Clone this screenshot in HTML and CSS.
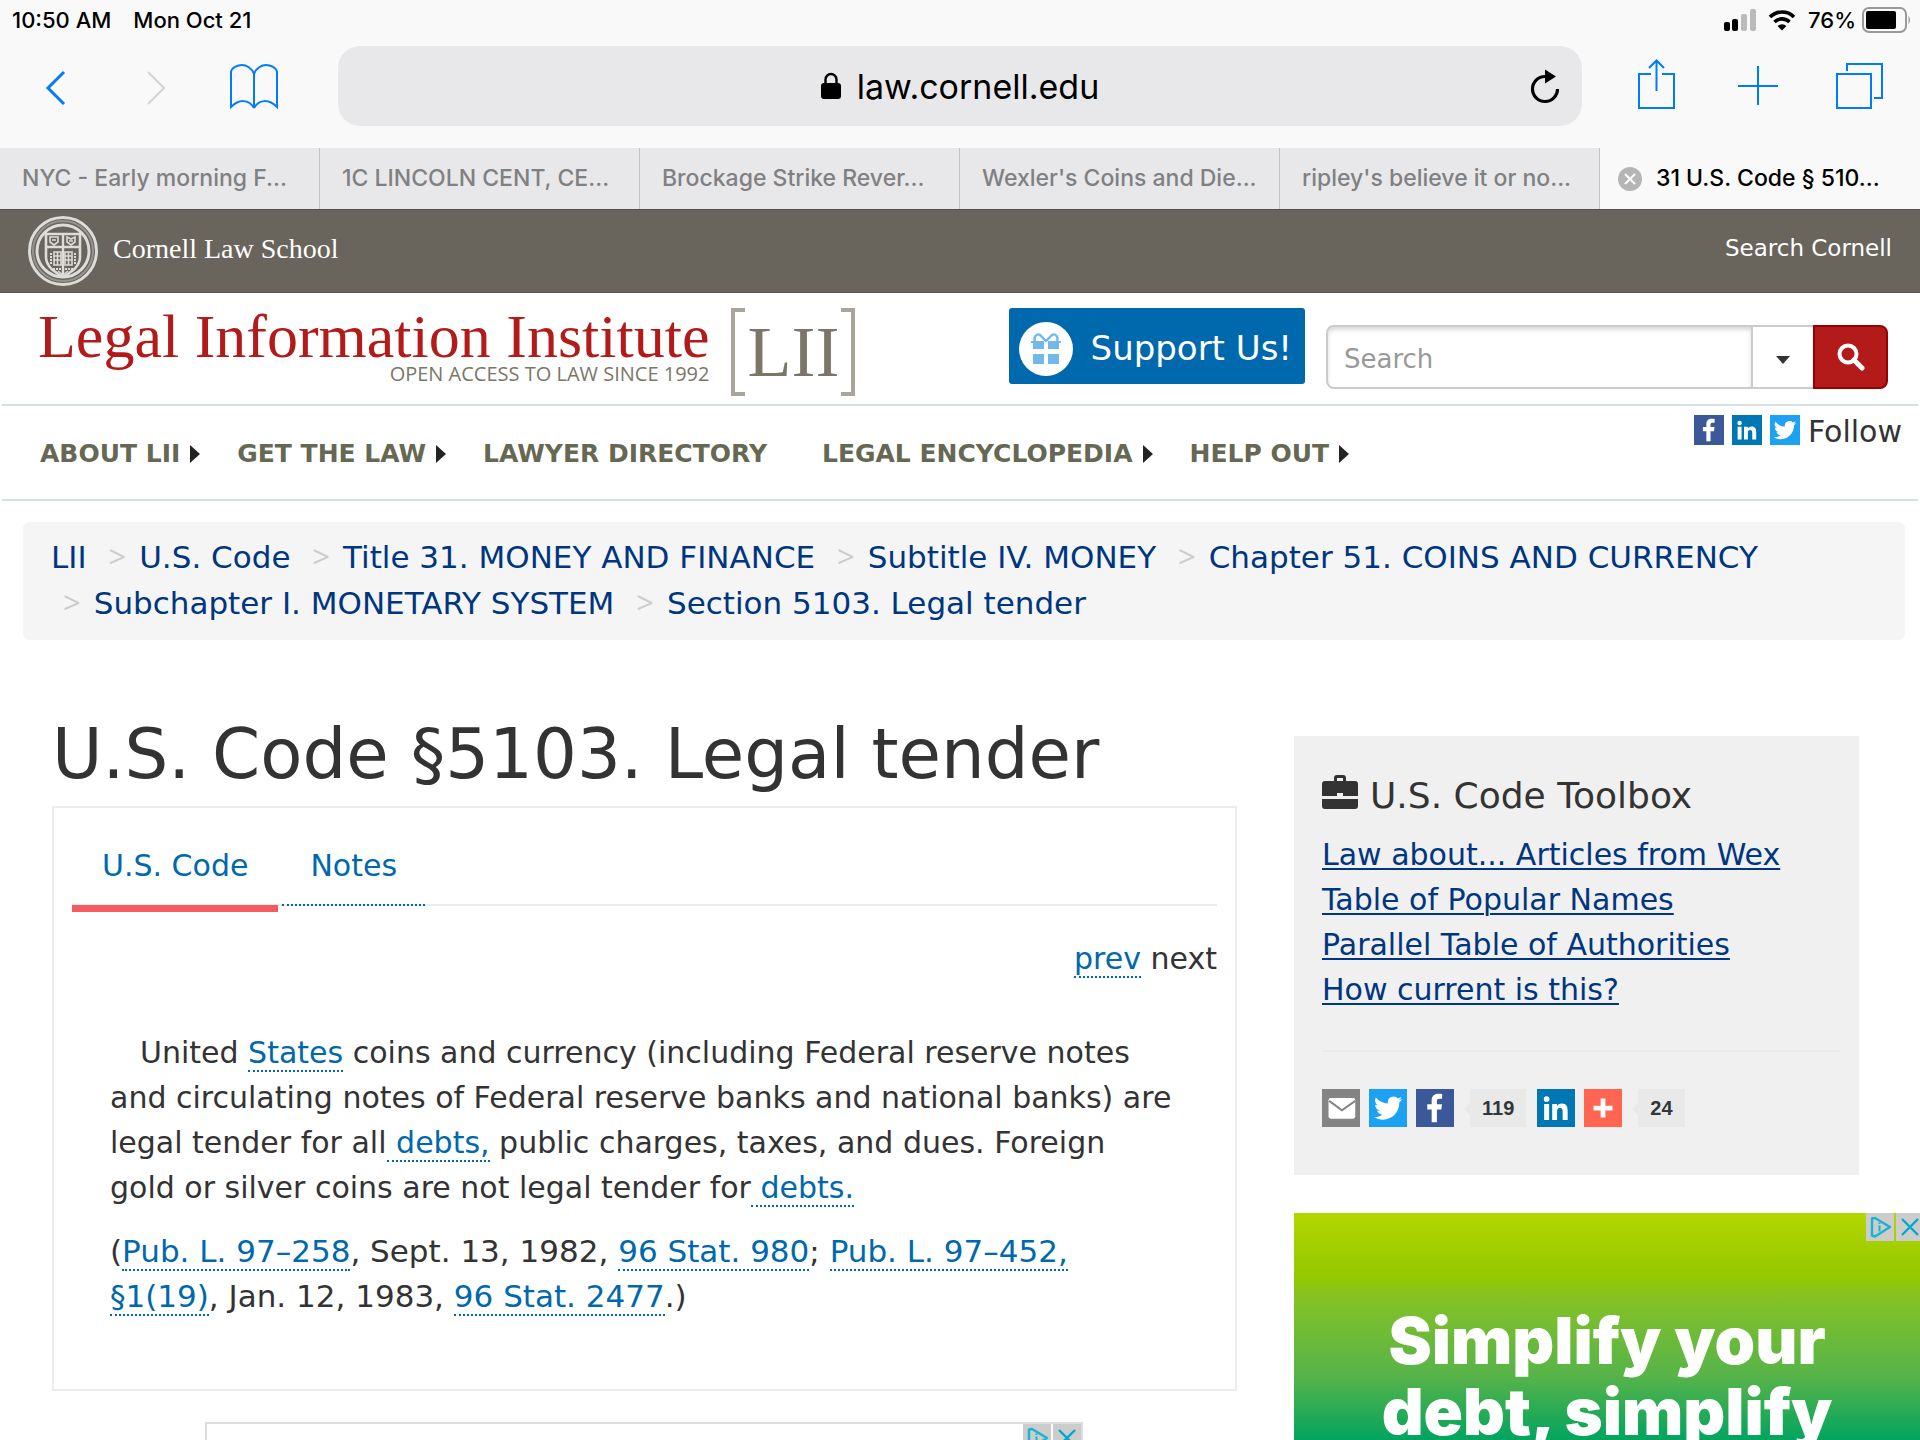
FILE: index.html
```html
<!DOCTYPE html>
<html lang="en">
<head>
  <meta charset="utf-8">
  <meta name="viewport" content="width=device-width, initial-scale=1">
  <title>31 U.S. Code § 5103 - Legal tender</title>
  <link rel="stylesheet" href="styles.css">
</head>
<body>
  <!-- shared icons -->
  <svg class="sprite" aria-hidden="true">
    <symbol id="i-facebook" viewBox="0 0 32 32">
      <path d="M17.6 28V17.2h3.7l.6-4.3h-4.3v-2.7c0-1.2.4-2 2.1-2h2.3V4.2c-.4 0-1.7-.2-3.3-.2-3.3 0-5.5 2-5.5 5.700v3.200H9.500v4.300h3.700V28z" fill="#fff"/>
    </symbol>
    <symbol id="i-linkedin" viewBox="0 0 32 32">
      <path d="M6 12.600h4.200V26H6zM8.100 6a2.400 2.400 0 1 1 0 4.800 2.400 2.400 0 0 1 0-4.800zM12.800 12.600h4v1.900c.6-1.100 2-2.200 4-2.200 4.200 0 5 2.700 5 6.300V26h-4.200v-6.500c0-1.600 0-3.600-2.200-3.600s-2.500 1.700-2.500 3.400V26h-4.100z" fill="#fff"/>
    </symbol>
    <symbol id="i-twitter" viewBox="0 0 32 32">
      <path d="M28 8.600a9.900 9.900 0 0 1-2.800.8 5 5 0 0 0 2.200-2.700c-1 .5-2 1-3.100 1.200a4.900 4.900 0 0 0-8.500 3.300c0 .4 0 .8.1 1.100-4-.2-7.700-2.100-10.100-5.100a4.900 4.900 0 0 0 1.500 6.600 4.900 4.900 0 0 1-2.200-.6v.1c0 2.400 1.700 4.400 3.900 4.800a4.900 4.900 0 0 1-2.200.1 4.900 4.900 0 0 0 4.600 3.400A9.900 9.900 0 0 1 4 23.600a13.900 13.900 0 0 0 7.500 2.200c9.100 0 14-7.500 14-14v-.6c1-.7 1.800-1.600 2.500-2.600z" fill="#fff"/>
    </symbol>
    <symbol id="i-adchoices" viewBox="0 0 28 28">
      <path d="M6 5.500v17l3 1 15-9.500L9 5z" fill="none" stroke="#19b4cf" stroke-width="2.400" stroke-linejoin="round"/>
      <path d="M13.500 12.500v6M13.500 9.500v1.500" stroke="#19b4cf" stroke-width="2"/>
    </symbol>
    <symbol id="i-adclose" viewBox="0 0 28 28">
      <path d="M6 6l16 16M22 6L6 22" stroke="#00a9cc" stroke-width="2.400"/>
    </symbol>
  </svg>

  <header class="browser">
    <div class="status">
      <span>10:50 AM</span>
      <span>Mon Oct 21</span>
      <div class="status-right">
        <svg width="32" height="24" viewBox="0 0 32 24">
          <rect x="0" y="14" width="6" height="9" rx="2"/>
          <rect x="8" y="11" width="6" height="12" rx="2"/>
          <rect x="17" y="6" width="6" height="17" rx="2" fill="#bbb"/>
          <rect x="26" y="1" width="6" height="22" rx="2" fill="#bbb"/>
        </svg>
        <svg width="28" height="24" viewBox="0 0 28 24" fill="none" stroke="#000" stroke-width="3.600">
          <path d="M2 9a17 17 0 0 1 24 0M6.500 14a10.600 10.600 0 0 1 15 0"/>
          <path d="M14 22.500l-4.400-4.400a6 6 0 0 1 8.800 0z" fill="#000" stroke="none"/>
        </svg>
        <span>76%</span>
        <svg width="50" height="28" viewBox="0 0 50 28">
          <rect x="1" y="2" width="43" height="24" rx="6" fill="none" stroke="#999" stroke-width="2"/>
          <rect x="4" y="5" width="30" height="18" rx="2"/>
          <path d="M46.500 9.500q3 4.500 0 9z" fill="#999"/>
        </svg>
      </div>
    </div>

    <div class="toolbar">
      <div class="tools">
        <button class="tool" aria-label="Back">
          <svg width="56" height="56" viewBox="0 0 56 56"><path d="M36 14L20 30l16 16" stroke-width="3"/></svg>
        </button>
        <button class="tool tool-off" aria-label="Forward" disabled>
          <svg width="56" height="56" viewBox="0 0 56 56"><path d="M21 14l16 16-16 16" stroke-width="2"/></svg>
        </button>
        <button class="tool" aria-label="Bookmarks">
          <svg width="56" height="56" viewBox="0 0 56 56"><path d="M28 50V16C26 10 20 7 16 7S6 9 5 14v35c8-8 18-8 23 1M28 16c2-6 8-9 12-9S50 9 51 14v35c-8-8-18-8-23 1"/></svg>
        </button>
      </div>
      <div class="address">
        <svg width="20" height="28" viewBox="0 0 20 28"><path d="M4.500 13V7.500a5.500 5.500 0 0 1 11 0V13" fill="none" stroke="#000" stroke-width="2.400"/><rect y="11" width="20" height="16" rx="3"/></svg>
        <span>law.cornell.edu</span>
        <button class="reload" aria-label="Reload">
          <svg width="30" height="36" viewBox="0 0 30 36"><path d="M15 8.500a12.500 12.500 0 1 0 12.500 12.500" fill="none" stroke="#000" stroke-width="3.200"/><path d="M15 1.500l11 7-11 7z"/></svg>
        </button>
      </div>
      <div class="tools tools-right">
        <button class="tool" aria-label="Share">
          <svg width="56" height="56" viewBox="0 0 56 56"><path d="M22 16H10v34h35V16H33M27.500 33V3M20 10l7.500-7.500L35 10"/></svg>
        </button>
        <button class="tool" aria-label="New tab">
          <svg width="56" height="56" viewBox="0 0 56 56"><path d="M28 8v39M8 28h40"/></svg>
        </button>
        <button class="tool" aria-label="Show tabs">
          <svg width="56" height="56" viewBox="0 0 56 56"><path d="M6 16h34v34H6zM16 13V6h35v34h-8"/></svg>
        </button>
      </div>
    </div>

    <nav class="tabs" aria-label="Open tabs">
      <a href="#">NYC - Early morning F...</a>
      <a href="#">1C LINCOLN CENT, CE...</a>
      <a href="#">Brockage Strike Rever...</a>
      <a href="#">Wexler's Coins and Die...</a>
      <a href="#">ripley's believe it or no...</a>
      <a href="#" class="active">
        <svg width="24" height="24" viewBox="0 0 24 24"><circle cx="12" cy="12" r="12" fill="#b5b5b6"/><path d="M7 7l10 10M17 7L7 17" stroke="#fff" stroke-width="2"/></svg>
        31 U.S. Code § 510...
      </a>
    </nav>
  </header>

  <div class="cornell">
    <a href="#" class="school">
      <svg width="70" height="70" viewBox="0 0 70 70" fill="none" stroke="#dcdcd8">
        <circle cx="35" cy="35" r="33.500" stroke-width="3"/>
        <circle cx="35" cy="35" r="30" stroke-width="2" opacity=".4"/>
        <circle cx="35" cy="35" r="26" stroke-width="3"/>
        <path d="M18 18h34v23c0 10-9 15-17 20-8-5-17-10-17-20z" stroke-width="2.600"/>
        <path d="M18 31h34M35 18v13M35 31v29" stroke-width="2.400"/>
        <path d="M22 21h8v5l-4 3-4-3zM39 21l4 2 4-2v5l-4 3-4-3zM24 24h4M41 25h4" stroke-width="1.600"/>
        <path d="M26 36h7v13h-7zM37 36h7v13h-7zM26 40h7M26 44h7M37 40h7M37 44h7M29.500 36v13M40.500 36v13" stroke-width="1.600"/>
        <path d="M23 37v12M47 37v12M25 53h20" stroke-width="2" stroke-dasharray="2 1"/>
        <path d="M30 55l5 4 5-4" stroke-width="1.600"/>
      </svg>
      <span>Cornell Law School</span>
    </a>
    <a href="#" class="search-cornell">Search Cornell</a>
  </div>

  <div class="masthead">
    <a href="#" class="logo">
      <span class="logo-words">
        <span class="logo-name">Legal Information Institute</span>
        <span class="logo-tag">OPEN ACCESS TO LAW SINCE 1992</span>
      </span>
      <span class="logo-mark">LII</span>
    </a>
    <div class="masthead-right">
      <a href="#" class="support">
        <svg width="54" height="54" viewBox="0 0 54 54">
          <circle cx="27" cy="27" r="27" fill="#fff"/>
          <g fill="#72b9ea">
            <path d="M12 19h13v8H14v-6h-2zM29 19h13v2h-2v6H29zM14 32h11v10H14zM29 32h11v10H29z"/>
            <path d="M16 19c-2-4 2-8 5-6l6 6 6-6c3-2 7 2 5 6" fill="none" stroke="#72b9ea" stroke-width="2.400"/>
          </g>
        </svg>
        Support Us!
      </a>
      <form class="search">
        <input type="text" placeholder="Search" aria-label="Search">
        <button type="button" class="search-scope" aria-label="Search scope"><svg width="14" height="8" viewBox="0 0 14 8"><path d="M0 0h14L7 8z" fill="#333"/></svg></button>
        <button type="submit" class="search-go" aria-label="Go"><svg width="28" height="28" viewBox="0 0 28 28" fill="none" stroke="#fff"><circle cx="11" cy="11" r="8.500" stroke-width="4"/><path d="M17 17l8 8" stroke-width="5" stroke-linecap="round"/></svg></button>
      </form>
    </div>
  </div>

  <div class="menu">
    <nav aria-label="Main">
      <a href="#" class="has-sub">ABOUT LII</a>
      <a href="#" class="has-sub">GET THE LAW</a>
      <a href="#" class="plain">LAWYER DIRECTORY</a>
      <a href="#" class="has-sub">LEGAL ENCYCLOPEDIA</a>
      <a href="#" class="has-sub">HELP OUT</a>
    </nav>
    <div class="follow">
      <a href="#" class="facebook" aria-label="Facebook"><svg width="30" height="30"><use href="#i-facebook"/></svg></a>
      <a href="#" class="linkedin" aria-label="LinkedIn"><svg width="30" height="30"><use href="#i-linkedin"/></svg></a>
      <a href="#" class="twitter" aria-label="Twitter"><svg width="30" height="30"><use href="#i-twitter"/></svg></a>
      <span>Follow</span>
    </div>
  </div>

  <ol class="breadcrumb">
    <li><a href="#">LII</a></li>
    <li><a href="#">U.S. Code</a></li>
    <li><a href="#">Title 31. MONEY AND FINANCE</a></li>
    <li><a href="#">Subtitle IV. MONEY</a></li>
    <li><a href="#">Chapter 51. COINS AND CURRENCY</a></li>
    <li><a href="#">Subchapter I. MONETARY SYSTEM</a></li>
    <li><a href="#">Section 5103. Legal tender</a></li>
  </ol>

  <div class="content">
    <main>
      <h1>U.S. Code §5103. Legal tender</h1>
      <div class="panel">
        <div class="panel-tabs">
          <a href="#" class="current">U.S. Code</a>
          <a href="#">Notes</a>
        </div>
        <div class="pager"><a href="#">prev</a> next</div>
        <div class="statute">
          <p class="indent">United <a href="#">States</a> coins and currency (including Federal reserve notes and circulating notes of Federal reserve banks and national banks) are legal tender for all<a href="#"> debts,</a> public charges, taxes, and dues. Foreign gold or silver coins are not legal tender for<a href="#"> debts.</a></p>
          <p class="credit">(<a href="#">Pub. L. 97–258</a>, Sept. 13, 1982, <a href="#">96 Stat. 980</a>; <a href="#">Pub. L. 97–452,<br>§1(19)</a>, Jan. 12, 1983, <a href="#">96 Stat. 2477</a>.)</p>
        </div>
      </div>
      <div class="banner">
        <div class="ad-badges">
          <button aria-label="AdChoices"><svg width="28" height="28"><use href="#i-adchoices"/></svg></button>
          <button aria-label="Close ad"><svg width="28" height="28"><use href="#i-adclose"/></svg></button>
        </div>
      </div>
    </main>

    <aside>
      <div class="toolbox">
        <h2>
          <svg width="36" height="34" viewBox="0 0 36 34"><path d="M12 6V3q0-3 3-3h6q3 0 3 3v3h9q3 0 3 3v12H21v-3h-6v3H0V9q0-3 3-3zM15 6h6V3h-6zM0 24h36v7q0 3-3 3H3q-3 0-3-3z" fill="#333" fill-rule="evenodd"/></svg>
          U.S. Code Toolbox
        </h2>
        <ul>
          <li><a href="#">Law about... Articles from Wex</a></li>
          <li><a href="#">Table of Popular Names</a></li>
          <li><a href="#">Parallel Table of Authorities</a></li>
          <li><a href="#">How current is this?</a></li>
        </ul>
        <div class="share">
          <a href="#" class="email" aria-label="Email"><svg width="38" height="38" viewBox="0 0 32 32"><rect x="5.500" y="7.500" width="22.500" height="17.500" rx="2" fill="#fff"/><path d="M6 10l10.800 8L28 10" fill="none" stroke="#848484" stroke-width="1.600"/></svg></a>
          <a href="#" class="twitter" aria-label="Twitter"><svg width="38" height="38"><use href="#i-twitter"/></svg></a>
          <a href="#" class="facebook" aria-label="Facebook"><svg width="38" height="38"><use href="#i-facebook"/></svg></a>
          <span class="count">119</span>
          <a href="#" class="linkedin" aria-label="LinkedIn"><svg width="38" height="38"><use href="#i-linkedin"/></svg></a>
          <a href="#" class="more" aria-label="More"><svg width="38" height="38" viewBox="0 0 32 32"><path d="M16 8v16M8 16h16" stroke="#fff" stroke-width="4"/></svg></a>
          <span class="count">24</span>
        </div>
      </div>
      <div class="promo">
        <p>Simplify your<br>debt, simplify</p>
        <div class="ad-badges">
          <button aria-label="AdChoices"><svg width="28" height="28"><use href="#i-adchoices"/></svg></button>
          <button aria-label="Close ad"><svg width="28" height="28"><use href="#i-adclose"/></svg></button>
        </div>
      </div>
    </aside>
  </div>
</body>
</html>
```
FILE: styles.css
```css
:root {
  --text: #333;
  --link: #0068ac;
  --navy: #003580;
  --cornell: #69645c;
  --chrome: #f9f9f9;
  --chrome-dark: #e8e8ea;
  --ios-blue: #007aff;
  --rule: #d5e0e3;
}
* { box-sizing: border-box; }
body {
  display: flex;
  flex-direction: column;
  height: 100vh;
  margin: 0;
  overflow: hidden;
  background: #fff;
  color: var(--text);
  font-family: Verdana, "DejaVu Sans", sans-serif;
  font-size: 30px;
  line-height: 45px;
}
body > * { flex-shrink: 0; }
a { color: inherit; text-decoration: none; }
svg { display: block; flex-shrink: 0; }
button {
  padding: 0;
  border: none;
  background: none;
  cursor: pointer;
}
.sprite {
  position: absolute;
  width: 0;
  height: 0;
}

/* browser chrome */
.browser {
  background: var(--chrome);
  font-family: Inter, sans-serif;
  color: #000;
}
.status {
  display: flex;
  align-items: center;
  gap: 22px;
  height: 40px;
  padding: 0 8px 0 12px;
  font-size: 22px;
  font-weight: 500;
}
.status-right {
  display: flex;
  align-items: center;
  gap: 12px;
  margin-left: auto;
}
.status-right span { margin-right: -6px; }
.toolbar {
  display: flex;
  align-items: center;
  height: 108px;
  padding: 0 33px 16px 28px;
}
.tools {
  display: flex;
  justify-content: space-between;
  width: 254px;
  margin-right: 56px;
}
.tools-right {
  width: 258px;
  margin: 0 0 0 47px;
}
.tool svg {
  fill: none;
  stroke: var(--ios-blue);
  stroke-width: 2;
}
.tool-off svg { stroke: #d4d4d6; }
.address {
  display: flex;
  flex: 1;
  align-items: center;
  gap: 16px;
  height: 80px;
  padding: 0 22px;
  border-radius: 22px;
  background: var(--chrome-dark);
  font-size: 34px;
}
.address::before { content: ""; flex: 1; }
.reload {
  display: flex;
  flex: 1;
  justify-content: flex-end;
}
.tabs {
  display: grid;
  grid-template-columns: repeat(6, 1fr);
}
.tabs a {
  display: flex;
  align-items: center;
  gap: 14px;
  height: 61px;
  padding-left: 22px;
  border-right: 1px solid #c4c4c6;
  background: var(--chrome-dark);
  color: #808082;
  font-size: 23px;
  font-weight: 500;
  white-space: nowrap;
}
.tabs a.active {
  padding-left: 18px;
  border: none;
  background: var(--chrome);
  color: #000;
}

/* Cornell strip */
.cornell {
  display: flex;
  align-items: center;
  justify-content: space-between;
  height: 84px;
  padding: 0 28px;
  border-top: 1px solid #55524b;
  border-bottom: 1px solid #55524b;
  background: var(--cornell);
  color: #fff;
}
.school {
  display: flex;
  align-items: center;
  gap: 15px;
  font-family: Palatino, "Liberation Serif", serif;
  font-size: 28px;
}
.school span,
.search-cornell { padding-bottom: 5px; }
.search-cornell { font-size: 23px; }

/* masthead */
.masthead {
  display: flex;
  justify-content: space-between;
  height: 113px;
  margin: 0 2px;
  padding: 15px 30px 0 36px;
  border-bottom: 2px solid var(--rule);
}
.logo {
  display: flex;
  gap: 22px;
}
.logo-words {
  display: flex;
  flex-direction: column;
  align-items: flex-end;
}
.logo-name {
  color: #b31b1b;
  font-family: Palatino, "Liberation Serif", serif;
  font-size: 62px;
  line-height: 56px;
}
.logo-tag {
  color: #7b7668;
  font-family: "Open Sans", sans-serif;
  font-size: 20px;
  line-height: 20px;
}
.logo-mark {
  height: 88px;
  padding: 0 12px;
  background:
    linear-gradient(#a9a59b, #a9a59b) left top / 10px 4px no-repeat,
    linear-gradient(#a9a59b, #a9a59b) left bottom / 10px 4px no-repeat,
    linear-gradient(#a9a59b, #a9a59b) right top / 10px 4px no-repeat,
    linear-gradient(#a9a59b, #a9a59b) right bottom / 10px 4px no-repeat;
  border: solid #a9a59b;
  border-width: 0 4px;
  color: #7b7668;
  font-family: Palatino, "Liberation Serif", serif;
  font-size: 72px;
  line-height: 88px;
}
.masthead-right {
  display: flex;
  gap: 21px;
}
.support {
  display: flex;
  align-items: center;
  gap: 18px;
  height: 76px;
  padding: 5px 13px 0 10px;
  border-radius: 3px;
  background: var(--link);
  color: #fff;
  font-size: 34px;
}
.search {
  display: flex;
  width: 562px;
  height: 64px;
  margin-top: 17px;
}
.search input {
  flex: 1;
  min-width: 0;
  padding: 4px 16px 0;
  border: 2px solid #ccc;
  border-radius: 8px 0 0 8px;
  box-shadow: inset 0 3px 4px rgba(0, 0, 0, 0.15);
  font: inherit;
  font-size: 26px;
}
.search input::placeholder { color: #999; }
.search button {
  display: flex;
  align-items: center;
  justify-content: center;
}
.search .search-scope {
  width: 60px;
  padding-top: 6px;
  border: solid #ccc;
  border-width: 2px 0;
}
.search .search-go {
  width: 75px;
  border: 2px solid #900;
  border-radius: 0 8px 8px 0;
  background: #b31b1b;
}

/* menu */
.menu {
  display: flex;
  justify-content: space-between;
  height: 95px;
  margin: 0 2px;
  padding: 0 16px 0 38px;
  border-bottom: 2px solid var(--rule);
}
.menu nav {
  display: flex;
  align-items: center;
  gap: 37px;
  padding-top: 2px;
  color: #666854;
  font-size: 25px;
  font-weight: 700;
}
.menu nav a {
  display: flex;
  align-items: center;
  gap: 10px;
}
.menu nav .plain { margin-right: 18px; }
.has-sub::after {
  content: "";
  border: solid transparent;
  border-width: 9px 0 9px 10px;
  border-left-color: #222;
}
.follow {
  display: flex;
  gap: 8px;
  padding-top: 9px;
  line-height: 34px;
}
.follow a { height: 30px; }
.facebook { background: #3b5998; }
.linkedin { background: #0077b5; }
.twitter { background: #1da1f2; }
.email { background: #848484; }
.more { background: #ff6550; }

/* breadcrumb */
.breadcrumb {
  margin: 21px 15px 0 23px;
  padding: 12px 28px 14px;
  border-radius: 6px;
  background: #f5f5f5;
  color: var(--navy);
  font-size: 31px;
  list-style: none;
}
.breadcrumb li { display: inline-block; }
.breadcrumb li + li::before {
  content: ">";
  padding: 0 13px 0 12px;
  color: #ccc;
  font-family: "Open Sans", sans-serif;
}

/* statute */
.content {
  display: grid;
  flex: 1;
  grid-template-columns: 1fr 626px;
  gap: 57px;
  min-height: 0;
  padding-left: 52px;
}
main,
aside {
  display: flex;
  flex-direction: column;
  min-width: 0;
}
h1 {
  margin: 74px 0 12px;
  font-size: 69px;
  font-weight: 400;
  line-height: 80px;
}
.panel {
  padding: 24px 18px 51px;
  border: 2px solid #ececec;
}
.panel-tabs {
  display: flex;
  gap: 4px;
  border-bottom: 2px solid #ececec;
  color: var(--link);
}
.panel-tabs a {
  margin-bottom: -2px;
  padding: 11px 28px 16px;
  border-bottom: 2px dotted var(--link);
}
.panel-tabs .current {
  margin-bottom: -8px;
  padding: 11px 30px 16px;
  border-bottom: 7px solid #f45b60;
}
.pager {
  padding-top: 30px;
  text-align: right;
}
.pager a,
.statute a {
  border-bottom: 2px dotted var(--link);
  color: var(--link);
}
.statute { padding: 49px 38px 0; }
.statute p { margin: 0 0 19px; }
.statute .indent { text-indent: 30px; }
.statute .credit { font-size: 31px; }
.banner {
  position: relative;
  flex: 1;
  min-height: 0;
  margin: 31px 154px 0 153px;
  overflow: hidden;
  border: solid #ddd;
  border-width: 2px 2px 0;
}
.ad-badges {
  position: absolute;
  top: 0;
  right: 0;
  display: flex;
  gap: 2px;
}
.ad-badges button { background: #ccc; }

/* sidebar */
.toolbox {
  margin: 96px 61px 38px 0;
  padding: 35px 19px 48px 28px;
  background: #f0f0f0;
}
.toolbox h2 {
  display: flex;
  gap: 12px;
  margin: 0;
  font-size: 36px;
  font-weight: 400;
  line-height: 50px;
}
.toolbox h2 svg { margin-top: 4px; }
.toolbox ul {
  margin: 0;
  padding: 11px 0 38px;
  border-bottom: 2px solid #ebebeb;
  color: var(--navy);
  list-style: none;
}
.toolbox li a {
  text-decoration: underline;
  text-decoration-thickness: 2px;
  text-underline-offset: 3px;
}
.share {
  display: flex;
  gap: 9px;
  padding-top: 37px;
}
.count {
  position: relative;
  margin: 0 2px 0 7px;
  padding: 0 12px;
  background: #e9e9e9;
  color: #32363b;
  font: bold 20px/38px "Liberation Sans", sans-serif;
}
.count::before {
  position: absolute;
  top: 14px;
  left: -6px;
  border: solid transparent;
  border-width: 6px 6px 6px 0;
  border-right-color: #e9e9e9;
  content: "";
}
.promo {
  position: relative;
  flex: 1;
  min-height: 0;
  padding: 92px 0 0;
  overflow: hidden;
  background: linear-gradient(#b3d600, #94c800 64px, #82c128 88px, #55b34a 165px, #00a45f 228px);
  color: #fff;
  font: 900 65px/71px Inter, sans-serif;
  text-align: center;
}
.promo p { margin: 0; }
.promo .ad-badges { right: -4px; }
```
